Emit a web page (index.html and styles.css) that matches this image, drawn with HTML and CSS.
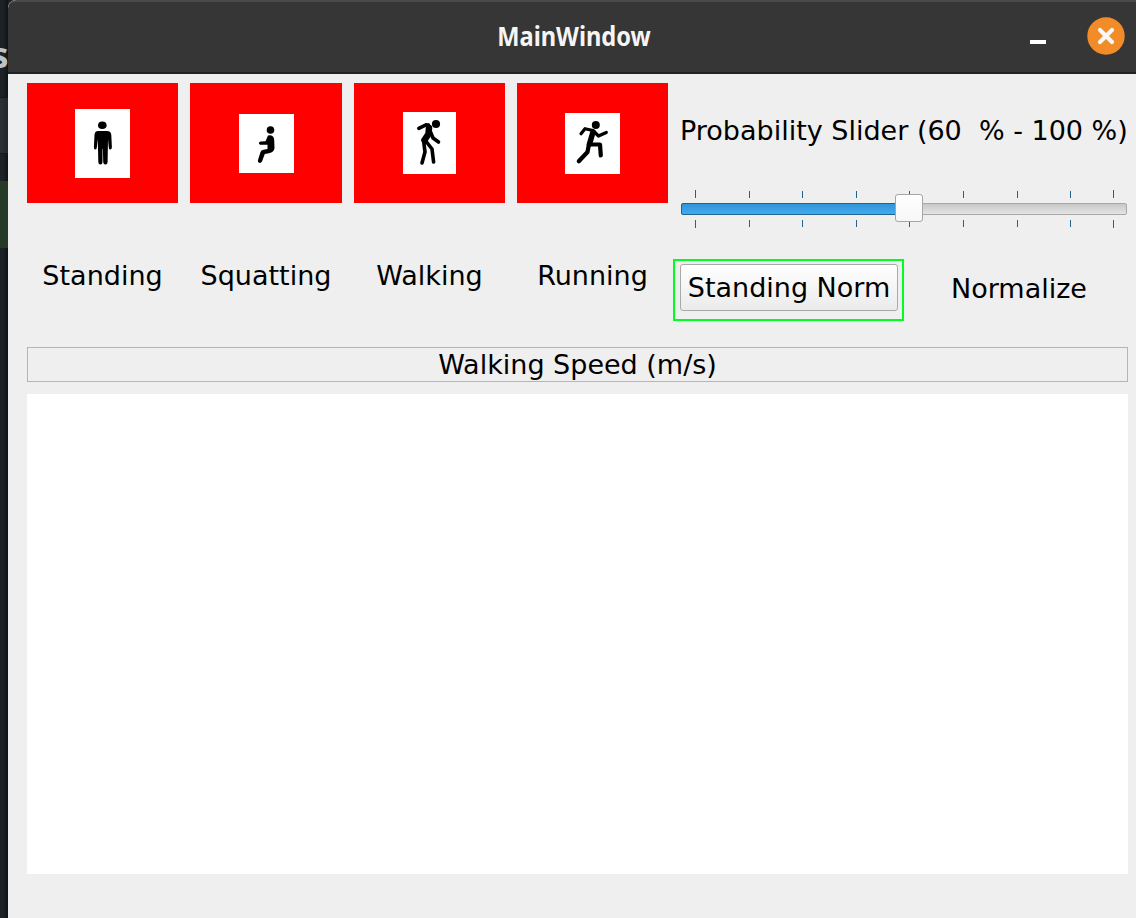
FILE: index.html
```html
<!DOCTYPE html>
<html lang="en">
<head>
<meta charset="utf-8">
<title>MainWindow</title>
<link rel="stylesheet" href="styles.css">
</head>
<body>
<div class="desktop">
  <div class="backdrop"><span class="backdrop-letter">s</span><div class="panel"></div><div class="panel-green"></div></div>
  <main class="window">
    <header class="titlebar">
      <h1 class="title">MainWindow</h1>
      <div class="controls">
        <svg class="minimize" width="16" height="4"><rect width="16" height="4" fill="#fff"/></svg>
        <svg class="close" width="38" height="38" viewBox="0 0 38 38"><circle cx="19" cy="19" r="18.7" fill="#f28c28"/><path d="M13 13L25 25M25 13L13 25" stroke="#f8f8f8" stroke-width="4.2" stroke-linecap="round"/></svg>
      </div>
    </header>
    <div class="content">
      <section class="top">
        <div class="tile"><svg width="55" height="69" viewBox="5 9 55 69"><rect x="5" y="9" width="55" height="69" fill="#fff"/><ellipse cx="32.3" cy="25.3" rx="4.3" ry="3.8"/><path d="M28 31H37Q41 31 41.300 35L41.900 47Q41.900 49.500 40.200 49.500Q38.900 49.500 38.700 47L38 39L37.600 62Q37.600 64.500 35.400 64.500Q33.300 64.500 33.200 62L32.900 49H32.500L32.500 62Q32.400 64.500 30.400 64.500Q28.400 64.500 28.300 62L27.800 39L26.900 47Q26.700 49.500 25.400 49.500Q23.800 49.500 23.900 47L24.500 35Q24.800 31 28 31Z"/></svg></div>
        <div class="tile"><svg width="55" height="59" viewBox="5 8 55 59"><rect x="5" y="8" width="55" height="59" fill="#fff"/><circle cx="36.500" cy="24" r="3.800"/><path class="solid" d="M34 29.500Q39.800 28.500 40.200 34L40.500 42Q40 46.500 35 47.200L30.800 48L28 55.500Q26.700 57.800 24.600 56.500Q23.600 55.500 24 54L26.500 46Q27 44 29.500 43.700L33.500 43V38.800H26Q24.500 38 25 36.500L26.500 35.500L31.500 35.200Z"/></svg></div>
        <div class="tile"><svg width="53" height="62" viewBox="7 6 53 62"><rect x="7" y="6" width="53" height="62" fill="#fff"/><circle cx="40" cy="18" r="4.100"/><path d="M33 22L32.500 28L28.500 34" stroke-width="6.500"/><path d="M32.500 19L30 18.800L22.800 22.300M34.500 26L37 32L42.500 36M27.500 34L29 46L26 57M29 34L36 43L37.600 56" stroke-width="3.600"/></svg></div>
        <div class="tile"><svg width="55" height="61" viewBox="5 7 55 61"><rect x="5" y="7" width="55" height="61" fill="#fff"/><circle cx="35.800" cy="19" r="4"/><path d="M33 26L29.500 38" stroke-width="5.500"/><path d="M33 24.500L25 22.700L21 27.800M34.500 26L38.500 30L46.300 26.500" stroke-width="3.200"/><path d="M29 38L27.500 46L18.800 55.300M30 38.500L40 38.500L40.800 49.500" stroke-width="4.200"/></svg></div>
        <div class="slider-box">
          <div class="slider-label">Probability Slider (60&nbsp; % - 100 %)</div>
          <svg class="slider" width="448" height="42" viewBox="680 188 448 42">
            <defs>
              <linearGradient id="fill" x2="0" y2="1"><stop stop-color="#3293d5"/><stop offset="1" stop-color="#40acf3"/></linearGradient>
              <linearGradient id="groove" x2="0" y2="1"><stop stop-color="#c6c6c6"/><stop offset="1" stop-color="#e6e6e6"/></linearGradient>
              <linearGradient id="handle" x2="0" y2="1"><stop stop-color="#fff"/><stop offset="1" stop-color="#f7f7f7"/></linearGradient>
            </defs>
            <path class="ticks" d="M695.500 190V198M749.500 191V198M802.500 191V198M856.500 191V198M909.500 191V198M963.500 191V198M1017.500 191V198M1070.500 191V198M1113.500 190V198M695.500 220V228M749.500 220V227M802.500 220V227M856.500 220V227M909.500 220V227M963.500 220V227M1017.500 220V227M1070.500 220V227M1113.500 220V228"/>
            <rect x="681.500" y="203.500" width="445" height="11" rx="1.500" fill="url(#groove)" stroke="#a8a8a8"/>
            <path d="M909 203.500H683Q681.500 203.500 681.500 205V213Q681.500 214.500 683 214.500H909Z" fill="url(#fill)" stroke="#21638f"/>
            <rect x="895.500" y="194.500" width="27" height="27" rx="2.500" fill="url(#handle)" stroke="#a5a5a5"/>
          </svg>
        </div>
      </section>
      <section class="labels">
        <div class="name">Standing</div><div class="name">Squatting</div><div class="name">Walking</div><div class="name">Running</div>
        <div class="button-box"><button class="norm-button">Standing Norm</button><div class="highlight"></div></div>
        <div class="status">Normalize</div>
      </section>
      <div class="speed">Walking Speed (m/s)</div>
      <div class="plot"></div>
    </div>
  </main>
</div>
</body>
</html>
```
FILE: styles.css
```css
* { box-sizing: border-box; }
body { margin: 0; overflow: hidden; background: #1b2024; color: #000; font-family: "DejaVu Sans", sans-serif; font-size: 27px; line-height: 32px; }
.desktop { display: flex; height: 918px; }
.backdrop { width: 8px; flex: none; overflow: hidden; padding-top: 39px; background: linear-gradient(90deg, #1d2226 40%, #0e1316); }
.backdrop-letter { display: block; height: 58px; margin-left: -9px; font: bold 35px/32px "Noto Sans", sans-serif; color: #bfc2c5; }
.panel { height: 57px; background: linear-gradient(90deg, #2c3136, #23272b); border-top: 1px solid #14181a; border-bottom: 1px solid #14181a; }
.panel-green { height: 67px; margin-top: 27px; background: #263a28; }
.window { width: 1128px; flex: none; background: #efefef; border-top-left-radius: 8px; overflow: hidden; }
.titlebar { display: grid; grid-template-columns: 1fr auto; height: 74px; padding-bottom: 2px; background: #363636; border-top: 2px solid #4a4a4a; border-bottom: 2px solid #222; align-items: center; border-top-left-radius: 8px; }
.title { grid-area: 1 / 1 / 2 / 3; margin: 0 0 0 4px; text-align: center; font: 700 27px/32px "Noto Sans", sans-serif; transform: scaleX(0.875); color: #f5f5f5; }
.controls { grid-area: 1 / 2; display: flex; align-items: center; gap: 41px; padding-right: 11px; }
.minimize { margin-top: 12px; }
.close { display: block; }
.content { padding: 9px 8px 0 19px; }
.top { display: grid; grid-template-columns: 151px 152px 151px 151px 448px; grid-template-rows: 120px; column-gap: 12px; }
.tile { background: #f00; display: flex; align-items: center; justify-content: center; }
.tile path { stroke: #000; fill: none; stroke-linecap: round; stroke-linejoin: round; }
.tile:first-child path, .tile .solid { fill: #000; stroke: none; }
.slider-label { padding-top: 32px; height: 105px; white-space: nowrap; }
.slider { display: block; }
.ticks { stroke: #21638f; }
.labels { display: grid; grid-template-columns: 151px 152px 151px 151px 218px 218px; column-gap: 12px; height: 144px; padding-top: 57px; }
.name { text-align: center; }
.button-box { position: relative; padding-top: 4px; }
.norm-button { display: block; width: 218px; height: 47px; padding: 1px 0 0; border: 1px solid #a9a9a9; border-radius: 3px; background: linear-gradient(#fff, #ebebeb); color: #000; font: inherit; white-space: nowrap; }
.highlight { position: absolute; left: -7px; top: -1px; width: 231px; height: 62px; border: 2px solid #00ff21; }
.status { padding-top: 13px; text-align: center; }
.speed { height: 35px; padding-top: 1px; border: 1px solid #b5b5b5; text-align: center; }
.plot { height: 480px; margin-top: 12px; background: #fff; }
```
